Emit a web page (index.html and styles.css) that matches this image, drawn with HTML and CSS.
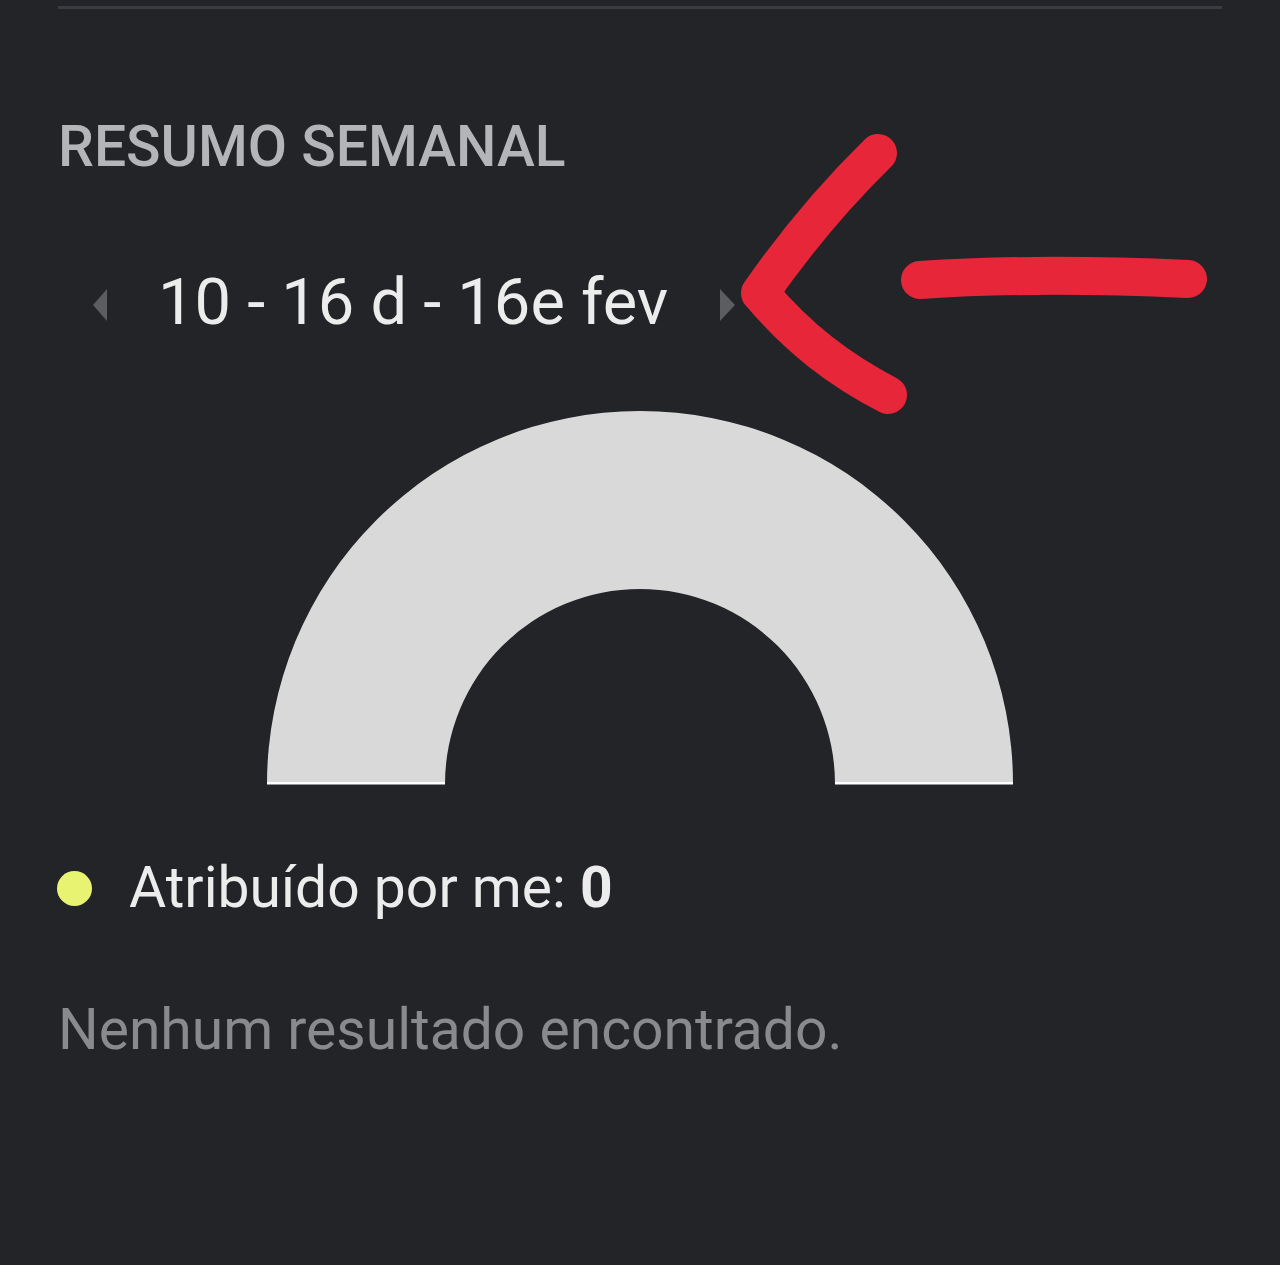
FILE: index.html
```html
<!DOCTYPE html>
<html lang="pt">
<head>
<meta charset="utf-8">
<link rel="stylesheet" href="styles.css">
</head>
<body>
<div class="page">
  <div class="divider"></div>
  <h2 class="title">RESUMO SEMANAL</h2>
  <div class="week-nav">
    <span class="tri tri-left"></span>
    <span class="week-label">10 - 16 d - 16e fev</span>
    <span class="tri tri-right"></span>
  </div>
  <div class="gauge">
    <svg width="748" height="375" viewBox="0 0 748 375">
      <path d="M1 373 A373 373 0 0 1 747 373 L569 373 A195 195 0 0 0 179 373 Z" fill="#d9d9d9"/>
      <rect x="1" y="371" width="178" height="2.5" fill="#ffffff"/>
      <rect x="569" y="371" width="178" height="2.5" fill="#ffffff"/>
    </svg>
  </div>
  <div class="legend">
    <span class="dot"></span>
    <span class="legend-text">Atribuído por me: <b>0</b></span>
  </div>
  <p class="empty">Nenhum resultado encontrado.</p>
</div>
<svg class="annotation" width="1280" height="1265" viewBox="0 0 1280 1265">
  <path d="M878 153 C830 200 790 250 760 293 C800 340 840 370 888 395" fill="none" stroke="#e8263a" stroke-width="38" stroke-linecap="round" stroke-linejoin="round"/>
  <path d="M920 280 C1010 274 1100 275 1188 279" fill="none" stroke="#e8263a" stroke-width="38" stroke-linecap="round"/>
</svg>
</body>
</html>
```
FILE: styles.css
```css
html, body {
  margin: 0;
  padding: 0;
  background: #232428;
  width: 1280px;
  height: 1265px;
  overflow: hidden;
}
body {
  position: relative;
  font-family: Roboto, "Liberation Sans", sans-serif;
}
.page {
  padding: 0 58px;
}
.divider {
  margin-top: 6px;
  height: 3px;
  background: #3a3c41;
}
.title {
  margin: 108px 0 0 0;
  font-size: 57px;
  font-weight: 500;
  line-height: 60px;
  color: #b4b5b9;
  letter-spacing: 0;
}
.week-nav {
  display: flex;
  align-items: center;
  margin: 85px 0 0 35px;
  height: 80px;
}
.tri {
  width: 0;
  height: 0;
  border-top: 16px solid transparent;
  border-bottom: 16px solid transparent;
  margin-top: 6px;
}
.tri-left {
  border-right: 14px solid #5b5d61;
}
.tri-right {
  border-left: 15px solid #5b5d61;
}
.week-label {
  font-size: 65px;
  color: #ececec;
  margin: 0 52px 0 51px;
  line-height: 80px;
}
.gauge {
  display: flex;
  justify-content: center;
  margin-top: 69px;
}
.gauge svg {
  display: block;
}
.legend {
  display: flex;
  align-items: center;
  margin-top: 67px;
  height: 70px;
}
.dot {
  width: 35px;
  height: 35px;
  border-radius: 50%;
  background: #e8f371;
  margin-left: -1px;
}
.legend-text {
  margin-left: 37px;
  font-size: 57px;
  color: #ececec;
  line-height: 70px;
}
.legend-text b {
  font-weight: 700;
}
.empty {
  margin: 72px 0 0 0;
  font-size: 57px;
  line-height: 70px;
  color: #898a8e;
}
.annotation {
  position: absolute;
  left: 0;
  top: 0;
  pointer-events: none;
}
```
